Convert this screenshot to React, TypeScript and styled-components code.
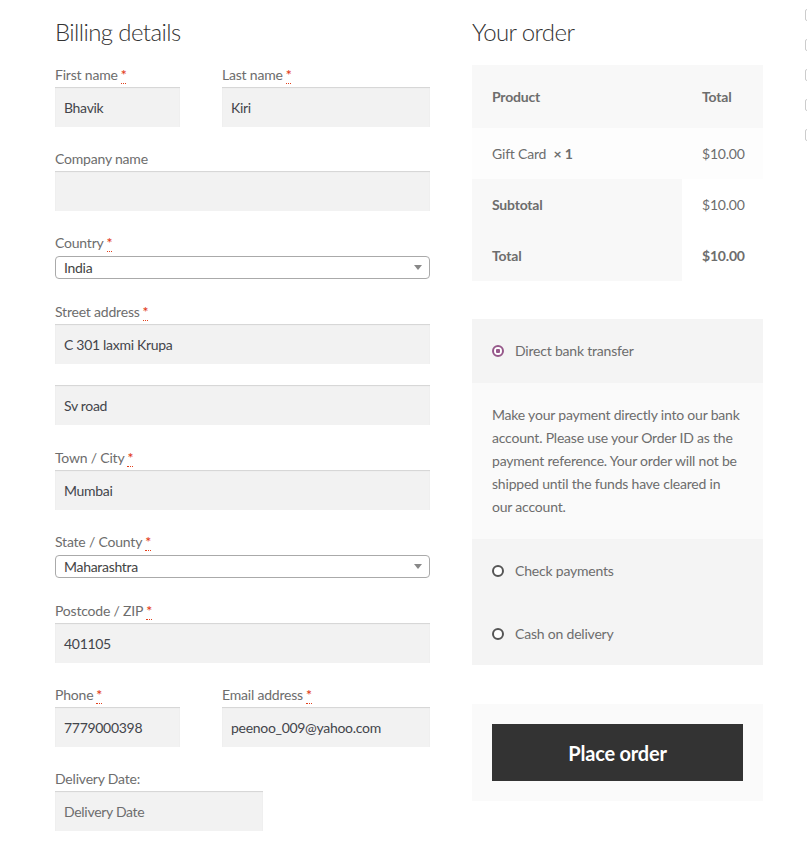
import styled, { createGlobalStyle } from 'styled-components'

const GlobalStyle = createGlobalStyle`
  html, body {
    margin: 0;
    padding: 0;
    background: #fff;
  }
  body {
    font-family: Lato, "Open Sans", sans-serif;
    font-size: 14px;
    letter-spacing: -0.2px;
    color: #6d6d6d;
  }
`

type FieldProps = {
  label: string
  value?: string
  placeholder?: string
  required?: boolean
  width?: number
}

const Field = ({ label, value, placeholder, required, width }: FieldProps) => (
  <Row $width={width}>
    <Label>
      {label}
      {required && <Req title="required">*</Req>}
    </Label>
    <Input>{value ? value : <Placeholder>{placeholder}</Placeholder>}</Input>
  </Row>
)

const SelectField = ({ label, value }: { label: string; value: string }) => (
  <Row $gap={23}>
    <Label>
      {label}
      <Req title="required">*</Req>
    </Label>
    <Select>
      <span>{value}</span>
      <Arrow />
    </Select>
  </Row>
)

const App = () => {
  return (
    <>
      <GlobalStyle />
      <Page>
        <Billing>
          <Heading>Billing details</Heading>
          <Pair>
            <Field label="First name" value="Bhavik" required width={125} />
            <Field label="Last name" value="Kiri" required width={208} />
          </Pair>
          <Field label="Company name" />
          <SelectField label="Country" value="India" />
          <Row $gap={23}>
            <Label>
              Street address<Req title="required">*</Req>
            </Label>
            <Input>C 301 laxmi Krupa</Input>
            <Input $second>Sv road</Input>
          </Row>
          <Field label="Town / City" value="Mumbai" required />
          <SelectField label="State / County" value="Maharashtra" />
          <Field label="Postcode / ZIP" value="401105" required />
          <Pair>
            <Field label="Phone" value="7779000398" required width={125} />
            <Field label="Email address" value="peenoo_009@yahoo.com" required width={208} />
          </Pair>
          <Field label="Delivery Date:" placeholder="Delivery Date" width={208} />
        </Billing>

        <Order>
          <Heading>Your order</Heading>
          <Table>
            <thead>
              <tr>
                <Th $h={63}>Product</Th>
                <Th $h={63}>Total</Th>
              </tr>
            </thead>
            <tbody>
              <tr>
                <Td $item>
                  Gift Card <Qty>× 1</Qty>
                </Td>
                <Td $item>$10.00</Td>
              </tr>
            </tbody>
            <tfoot>
              <tr>
                <Th>Subtotal</Th>
                <Td>$10.00</Td>
              </tr>
              <tr>
                <Th $h={50}>Total</Th>
                <Td>
                  <strong>$10.00</strong>
                </Td>
              </tr>
            </tfoot>
          </Table>

          <Payment>
            <Method $active>
              <Radio $checked />
              Direct bank transfer
            </Method>
            <Description>
              Make your payment directly into our bank account. Please use your Order ID as the
              payment reference. Your order will not be shipped until the funds have cleared in
              our account.
            </Description>
            <Method>
              <Radio />
              Check payments
            </Method>
            <Method>
              <Radio />
              Cash on delivery
            </Method>
          </Payment>

          <PlaceOrderBox>
            <PlaceOrder>Place order</PlaceOrder>
          </PlaceOrderBox>
        </Order>

        <Widgets>
          <Check />
          <Check />
          <Check />
          <Check />
          <Check />
        </Widgets>
      </Page>
    </>
  )
}

export default App

const Page = styled.div`
  display: flex;
  gap: 42px;
  padding: 14px 0 30px 55px;
  width: 100vw;
  box-sizing: border-box;
  overflow: hidden;
`

const Billing = styled.div`
  width: 375px;
  flex-shrink: 0;
`

const Order = styled.div`
  width: 291px;
  flex-shrink: 0;
`

const Heading = styled.h3`
  margin: 0 0 15px;
  height: 36px;
  line-height: 36px;
  font-size: 24px;
  font-weight: 300;
  color: #333;
  letter-spacing: -0.6px;
`

const Pair = styled.div`
  display: flex;
  justify-content: space-between;
`

const Row = styled.div<{ $width?: number; $gap?: number }>`
  width: ${(p) => (p.$width ? `${p.$width}px` : '100%')};
  margin-bottom: ${(p) => p.$gap ?? 22}px;
`

const Label = styled.label`
  display: block;
  line-height: 20px;
  height: 20px;
  margin-bottom: 2px;
  font-size: 14px;
  color: #6d6d6d;
`

const Req = styled.abbr`
  color: #e2401c;
  margin-left: 3px;
  text-decoration: none;
  border-bottom: 1px dotted #e2401c;
  font-weight: 600;
  line-height: 1;
`

const Input = styled.div<{ $second?: boolean }>`
  box-sizing: border-box;
  height: 40px;
  margin-top: ${(p) => (p.$second ? '21px' : '0')};
  padding: 0 9px;
  display: flex;
  align-items: center;
  background: #f2f2f2;
  box-shadow: inset 0 1px 1px rgba(0, 0, 0, 0.125);
  color: #43454b;
  font-size: 14px;
  letter-spacing: -0.3px;
`

const Placeholder = styled.span`
  color: #6d6d6d;
`

const Select = styled.div`
  box-sizing: border-box;
  height: 23px;
  margin-top: 3px;
  padding: 0 8px;
  display: flex;
  align-items: center;
  justify-content: space-between;
  border: 1px solid #aaa;
  border-radius: 4px;
  background: #fff;
  color: #444;
  font-size: 14px;
  letter-spacing: -0.3px;
`

const Arrow = styled.span`
  width: 0;
  height: 0;
  border-left: 4px solid transparent;
  border-right: 4px solid transparent;
  border-top: 5px solid #888;
  margin-right: -1px;
`

const Table = styled.table`
  width: 100%;
  table-layout: fixed;
  border-collapse: collapse;
  border-spacing: 0;
  margin: 1px 0 38px;
`

const Th = styled.th<{ $h?: number }>`
  box-sizing: border-box;
  text-align: left;
  font-weight: 700;
  font-size: 14px;
  color: #6d6d6d;
  background: #f8f8f8;
  padding: 0 20px;
  height: ${(p) => p.$h ?? 51}px;

  &:first-child {
    width: 210px;
  }
`

const Td = styled.td<{ $item?: boolean }>`
  text-align: left;
  font-size: 14px;
  color: #6d6d6d;
  background: ${(p) => (p.$item ? '#fdfdfd' : '#fff')};
  padding: 0 20px;
  height: 51px;

  strong {
    font-weight: 700;
  }
`

const Qty = styled.strong`
  font-weight: 700;
  margin-left: 4px;
`

const Payment = styled.div`
  background: #f4f4f4;
  margin-bottom: 39px;
`

const Method = styled.div<{ $active?: boolean }>`
  height: 63px;
  padding: 0 20px ${(p) => (p.$active ? '1px' : '0')};
  display: flex;
  align-items: center;
  font-size: 14px;
  color: #6d6d6d;
`

const Radio = styled.span<{ $checked?: boolean }>`
  box-sizing: border-box;
  width: 12px;
  height: 12px;
  margin-right: 11px;
  border-radius: 50%;
  border: 2px solid ${(p) => (p.$checked ? '#96588a' : '#555')};
  background: ${(p) => (p.$checked ? 'radial-gradient(circle, #96588a 0 2px, #fff 2.5px)' : '#fff')};
`

const Description = styled.div`
  background: #fafafa;
  padding: 20px 20px 21px;
  line-height: 23px;
  font-size: 14px;
  letter-spacing: -0.2px;
  color: #6d6d6d;
`

const PlaceOrderBox = styled.div`
  background: #fafafa;
  padding: 20px;
`

const PlaceOrder = styled.button`
  display: block;
  width: 100%;
  height: 57px;
  border: 0;
  background: #333;
  color: #fff;
  font-family: inherit;
  font-size: 20px;
  font-weight: 700;
  letter-spacing: -0.2px;
  cursor: pointer;
`

const Widgets = styled.div`
  margin-top: -5px;
  display: flex;
  flex-direction: column;
  gap: 18px;
  flex-shrink: 0;
`

const Check = styled.span`
  display: block;
  box-sizing: border-box;
  width: 13px;
  height: 12px;
  border: 1px solid #ccc;
  border-radius: 2px;
  background: #fff;
`
